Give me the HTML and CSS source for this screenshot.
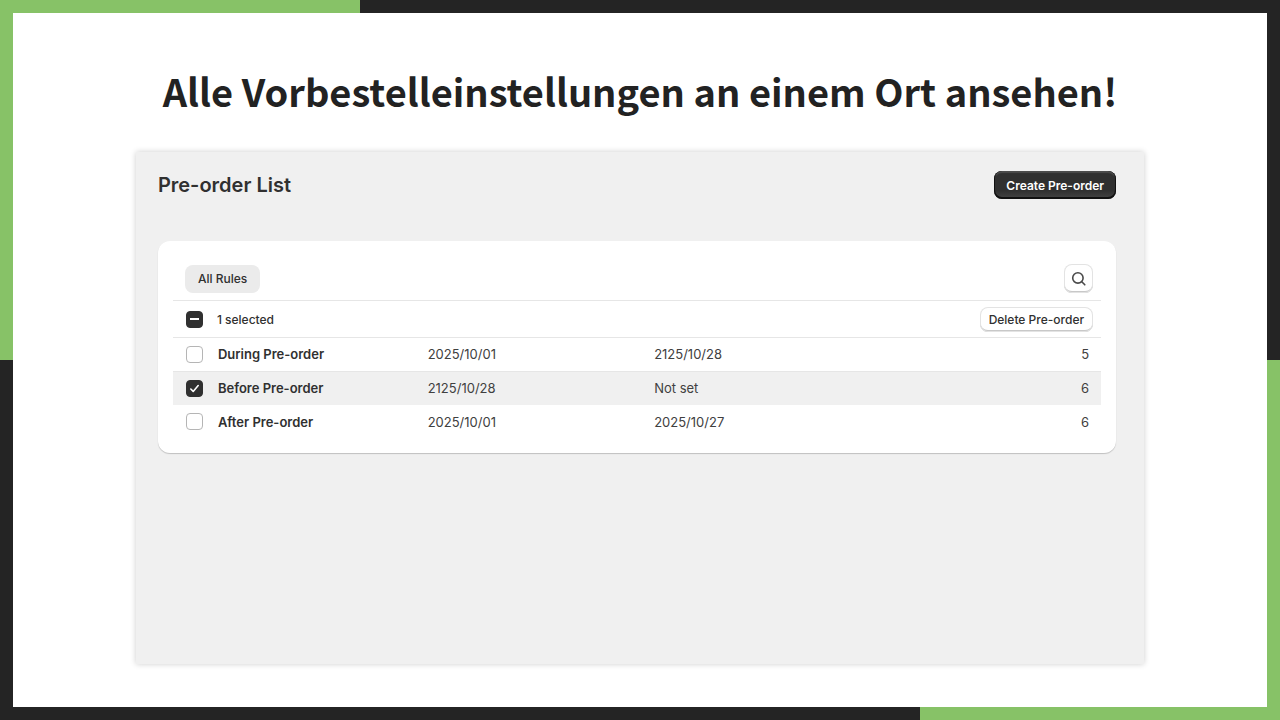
FILE: index.html
```html
<!DOCTYPE html>
<html lang="de">
<head>
    <meta charset="UTF-8">
    <meta name="viewport" content="width=device-width, initial-scale=1.0">
    <title>Pre-order List</title>
    <link rel="stylesheet" href="styles.css">
</head>
<body>
<main class="slide">
    <h1>Alle Vorbestelleinstellungen an einem Ort ansehen!</h1>
    <section class="panel" lang="en">
        <header class="panel-header">
            <h2>Pre-order List</h2>
            <button class="btn btn-primary" type="button">Create Pre-order</button>
        </header>
        <div class="card">
            <div class="toolbar">
                <button class="tab" type="button">All Rules</button>
                <button class="btn btn-icon" type="button" aria-label="Search">
                    <svg width="16" height="16" viewBox="0 0 16 16" fill="none" stroke="#4a4a4a" stroke-width="1.6" stroke-linecap="round">
                        <circle cx="6.9" cy="6.9" r="5.2"/>
                        <path d="M10.8 10.8l3 3"/>
                    </svg>
                </button>
            </div>
            <div class="bulk">
                <input type="checkbox" id="select-all" class="check partial">
                <label for="select-all">1 selected</label>
                <button class="btn btn-small" type="button">Delete Pre-order</button>
            </div>
            <table class="rules">
                <colgroup>
                    <col class="col-check">
                    <col class="col-name">
                    <col class="col-start">
                    <col class="col-end">
                    <col>
                </colgroup>
                <tbody>
                <tr>
                    <td><input type="checkbox" id="rule-1" class="check"></td>
                    <th scope="row"><label for="rule-1">During Pre-order</label></th>
                    <td>2025/10/01</td>
                    <td>2125/10/28</td>
                    <td class="count">5</td>
                </tr>
                <tr class="selected">
                    <td><input type="checkbox" id="rule-2" class="check" checked></td>
                    <th scope="row"><label for="rule-2">Before Pre-order</label></th>
                    <td>2125/10/28</td>
                    <td>Not set</td>
                    <td class="count">6</td>
                </tr>
                <tr>
                    <td><input type="checkbox" id="rule-3" class="check"></td>
                    <th scope="row"><label for="rule-3">After Pre-order</label></th>
                    <td>2025/10/01</td>
                    <td>2025/10/27</td>
                    <td class="count">6</td>
                </tr>
                </tbody>
            </table>
        </div>
    </section>
</main>
</body>
</html>
```
FILE: styles.css
```css
* {
    box-sizing: border-box;
}

body {
    margin: 0;
    min-height: 100vh;
    padding: 13px;
    display: flex;
    font-family: Inter, "Liberation Sans", sans-serif;
    font-size: 12px;
    color: #303030;
    background:
        linear-gradient(#87c267, #87c267) left top / 360px 50% no-repeat,
        linear-gradient(#87c267, #87c267) right bottom / 360px 50% no-repeat,
        #242424;
}

.slide {
    flex: 1;
    display: flex;
    flex-direction: column;
    background: #fff;
    padding: 46px 9.8% 43px;
}

h1 {
    margin: 0 0 29px;
    font-family: "Noto Sans CJK SC", "Noto Sans", sans-serif;
    font-size: 38px;
    line-height: 64px;
    font-weight: 700;
    text-align: center;
    color: #222;
}

.panel {
    flex: 1;
    padding: 19px 28px 24px 22px;
    background: #f0f0f0;
    box-shadow: 0 0 6px rgba(0, 0, 0, 0.2);
}

.panel-header {
    display: flex;
    align-items: center;
    justify-content: space-between;
    margin-bottom: 42px;
}

h2 {
    margin: 0;
    font-size: 20px;
    line-height: 28px;
    font-weight: 600;
}

button {
    font: inherit;
    color: inherit;
    border: none;
    cursor: pointer;
}

.btn {
    height: 28px;
    padding: 0 12px;
    border-radius: 8px;
    font-weight: 500;
    background: #fff;
    box-shadow: inset 0 0 0 1px #e3e3e3, inset 0 -2px 0 #c8c8c8;
}

.btn-primary {
    color: #fff;
    font-weight: 600;
    background: linear-gradient(#303030 70%, #454545);
    box-shadow: inset 0 -1px 0 1px #111, inset 0 2px 1px #4c4c4c;
}

.btn-icon {
    width: 29px;
    height: 29px;
    padding: 0;
    display: flex;
    align-items: center;
    justify-content: center;
}

.btn-small {
    height: 25px;
    padding: 0 9px;
    margin-left: auto;
}

.card {
    padding: 0 15px 15px;
    background: #fff;
    border-radius: 12px;
    box-shadow: 0 1px 1px rgba(0, 0, 0, 0.2);
}

.toolbar {
    display: flex;
    align-items: center;
    justify-content: space-between;
    padding: 23px 8px 7px 12px;
}

.tab {
    height: 28px;
    padding: 0 13px;
    border-radius: 8px;
    font-weight: 500;
    background: #ebebeb;
}

.bulk {
    display: flex;
    align-items: center;
    height: 38px;
    padding: 0 8px 0 13px;
    border-top: 1px solid #e6e6e6;
    border-bottom: 1px solid #e6e6e6;
    font-weight: 500;
}

.bulk label {
    margin-left: 14px;
}

.check {
    appearance: none;
    display: block;
    width: 17px;
    height: 17px;
    margin: 0;
    border: 1px solid #b5b5b5;
    border-radius: 4px;
    background: #fff center / 17px 17px no-repeat;
}

.check:checked {
    border-color: #303030;
    background-color: #303030;
    background-image: url("data:image/svg+xml,%3Csvg xmlns='http://www.w3.org/2000/svg' viewBox='0 0 17 17' fill='none' stroke='white' stroke-width='1.6' stroke-linecap='round' stroke-linejoin='round'%3E%3Cpath d='M4.8 9l2.4 2.4 5-5.8'/%3E%3C/svg%3E");
}

.check.partial {
    border-color: #303030;
    background-color: #303030;
    background-image: linear-gradient(#fff, #fff);
    background-size: 9px 2px;
}

.rules {
    width: 100%;
    table-layout: fixed;
    border-collapse: collapse;
    font-size: 13px;
}

.col-check {
    width: 45px;
}

.col-name {
    width: 22.6%;
}

.col-start {
    width: 24.4%;
}

.col-end {
    width: 30%;
}

.rules th, .rules td {
    height: 33px;
    padding: 0;
    text-align: left;
}

.rules td {
    color: #404040;
}

.rules td:first-child {
    padding-left: 13px;
}

.rules th {
    font-weight: 600;
}

.rules .count {
    padding-right: 12px;
    text-align: right;
}

.rules .selected th, .rules .selected td {
    height: 34px;
    background: #f0f0f0;
    border-top: 1px solid #e6e6e6;
}
```
